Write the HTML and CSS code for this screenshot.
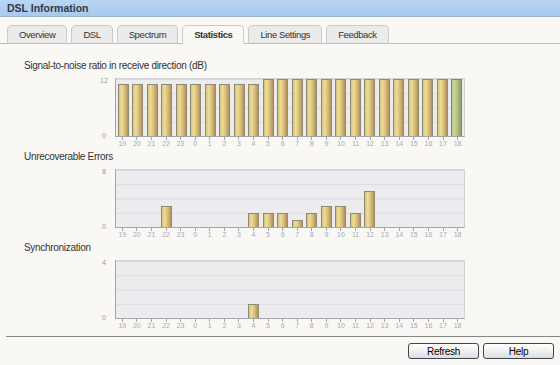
FILE: index.html
```html
<!DOCTYPE html>
<html lang="en">
<head>
  <meta charset="UTF-8">
  <title>DSL Information</title>
  <link rel="stylesheet" href="styles.css">
</head>
<body>
  <div class="titlebar">DSL Information</div>
  <ul class="tabs">
    <li class="tab">Overview</li>
    <li class="tab">DSL</li>
    <li class="tab">Spectrum</li>
    <li class="tab active">Statistics</li>
    <li class="tab">Line Settings</li>
    <li class="tab">Feedback</li>
  </ul>

  <div class="charts">
    <div class="chart" id="snrChart">
      <div class="chart-title">Signal-to-noise ratio in receive direction (dB)</div>
      <div class="chart-body">
        <div class="y-axis"><span>12</span><span>0</span></div>
        <div class="plot"></div>
      </div>
      <div class="x-axis"></div>
    </div>
    <div class="chart" id="errChart">
      <div class="chart-title">Unrecoverable Errors</div>
      <div class="chart-body">
        <div class="y-axis"><span>8</span><span>0</span></div>
        <div class="plot"></div>
      </div>
      <div class="x-axis"></div>
    </div>
    <div class="chart" id="syncChart">
      <div class="chart-title">Synchronization</div>
      <div class="chart-body">
        <div class="y-axis"><span>4</span><span>0</span></div>
        <div class="plot"></div>
      </div>
      <div class="x-axis"></div>
    </div>
  </div>

  <div class="footer">
    <button class="btn" id="refreshButton">Refresh</button>
    <button class="btn" id="helpButton">Help</button>
  </div>

  <script>
    const hours = [19, 20, 21, 22, 23, 0, 1, 2, 3, 4, 5, 6, 7, 8, 9, 10, 11, 12, 13, 14, 15, 16, 17, 18];
    const charts = [
      { id: "snrChart", max: 12, values: [11,11,11,11,11,11,11,11,11,11,12,12,12,12,12,12,12,12,12,12,12,12,12,12], current: true },
      { id: "errChart", max: 8, values: [0,0,0,3,0,0,0,0,0,2,2,2,1,2,3,3,2,5,0,0,0,0,0,0] },
      { id: "syncChart", max: 4, values: [0,0,0,0,0,0,0,0,0,1,0,0,0,0,0,0,0,0,0,0,0,0,0,0] }
    ];

    charts.forEach((chart) => {
      const box = document.getElementById(chart.id);
      const plot = box.querySelector(".plot");
      const axis = box.querySelector(".x-axis");
      chart.values.forEach((v, i) => {
        const slot = document.createElement("div");
        slot.className = "slot";
        if (v > 0) {
          const bar = document.createElement("div");
          bar.className = "bar";
          if (chart.current && i === chart.values.length - 1) bar.classList.add("bar-current");
          bar.style.height = (v / chart.max * 100) + "%";
          slot.appendChild(bar);
        }
        plot.appendChild(slot);
        const label = document.createElement("span");
        label.textContent = hours[i];
        axis.appendChild(label);
      });
    });
  </script>
</body>
</html>
```

FILE: styles.css
```css
* { margin: 0; padding: 0; box-sizing: border-box; }
body {
  font-family: "Liberation Sans", Arial, sans-serif;
  font-size: 10px;
  color: #333;
  background: #f9f8f4;
  width: 560px;
  height: 365px;
  overflow: hidden;
}
.titlebar {
  height: 17px;
  padding-left: 7px;
  line-height: 16px;
  font-size: 10.5px;
  font-weight: bold;
  color: #2e3a48;
  background: linear-gradient(#bad6f3, #a6c9ed);
  border-bottom: 1px solid #9cb4cc;
}
.tabs {
  list-style: none;
  display: flex;
  gap: 4px;
  margin-top: 8px;
  padding-left: 7px;
  border-bottom: 1px solid #bdbdbd;
}
.tab {
  height: 19px;
  line-height: 18px;
  padding: 0 11px;
  font-size: 9.5px;
  letter-spacing: -0.4px;
  color: #333;
  background: #ebebeb;
  border: 1px solid #cacaca;
  border-radius: 5px 5px 0 0;
  margin-bottom: -1px;
  border-bottom: 1px solid #bdbdbd;
}
.tab.active {
  font-weight: bold;
  background: #f9f8f4;
  border-bottom-color: #f9f8f4;
}
.charts {
  padding-top: 16px;
}
.chart-title {
  height: 12px;
  line-height: 12px;
  padding-left: 24px;
  letter-spacing: -0.3px;
  margin-bottom: 6px;
}
.chart + .chart { margin-top: 2px; }
.chart-body {
  display: flex;
  padding-left: 94px;
}
.y-axis {
  width: 21px;
  padding-right: 1px;
  display: flex;
  flex-direction: column;
  justify-content: space-between;
  align-items: center;
  margin: -2px 0 -4px;
  font-size: 7px;
  line-height: 10px;
  color: #9a9a9a;
}
.plot {
  width: 350px;
  height: 59px;
  display: flex;
  align-items: flex-end;
  border: 1px solid #cfd3d8;
  border-left-color: #a2a6aa;
  border-bottom-color: #a2a6aa;
  background-color: #ececee;
  background-image: linear-gradient(#d8dbe0 1px, transparent 1px);
  background-size: 100% 25%;
}
.slot {
  flex: 1;
  height: 100%;
  display: flex;
  justify-content: center;
  align-items: flex-end;
}
.bar {
  width: 11px;
  border: 1px solid #918b72;
  border-bottom: none;
  background: linear-gradient(to right, #d4c07a 0%, #ebdd96 28%, #d8c07c 62%, #b3915c 100%);
}
.bar-current {
  border-color: #7f8a6e;
  background: linear-gradient(to right, #b6c48a 0%, #cad69c 28%, #aebd80 62%, #8d9c64 100%);
}
.x-axis {
  display: flex;
  width: 350px;
  height: 12px;
  margin-left: 115px;
}
.x-axis span {
  flex: 1;
  text-align: center;
  font-size: 7px;
  line-height: 13px;
  color: #a6aab6;
  background: linear-gradient(#a2a6aa, #a2a6aa) no-repeat center top / 1px 3px;
}
.footer {
  display: flex;
  justify-content: flex-end;
  gap: 4px;
  margin: 5px 0 0 6px;
  padding: 6px 6px 0 0;
  border-top: 1px solid #7e8a82;
}
.btn {
  width: 71px;
  height: 16px;
  font-family: "Liberation Sans", Arial, sans-serif;
  font-size: 10px;
  letter-spacing: -0.3px;
  color: #000;
  border: 1px solid #3d4752;
  border-radius: 3px;
  background: linear-gradient(#ffffff, #f2f2f0 45%, #dcdde4);
  cursor: pointer;
}
```
